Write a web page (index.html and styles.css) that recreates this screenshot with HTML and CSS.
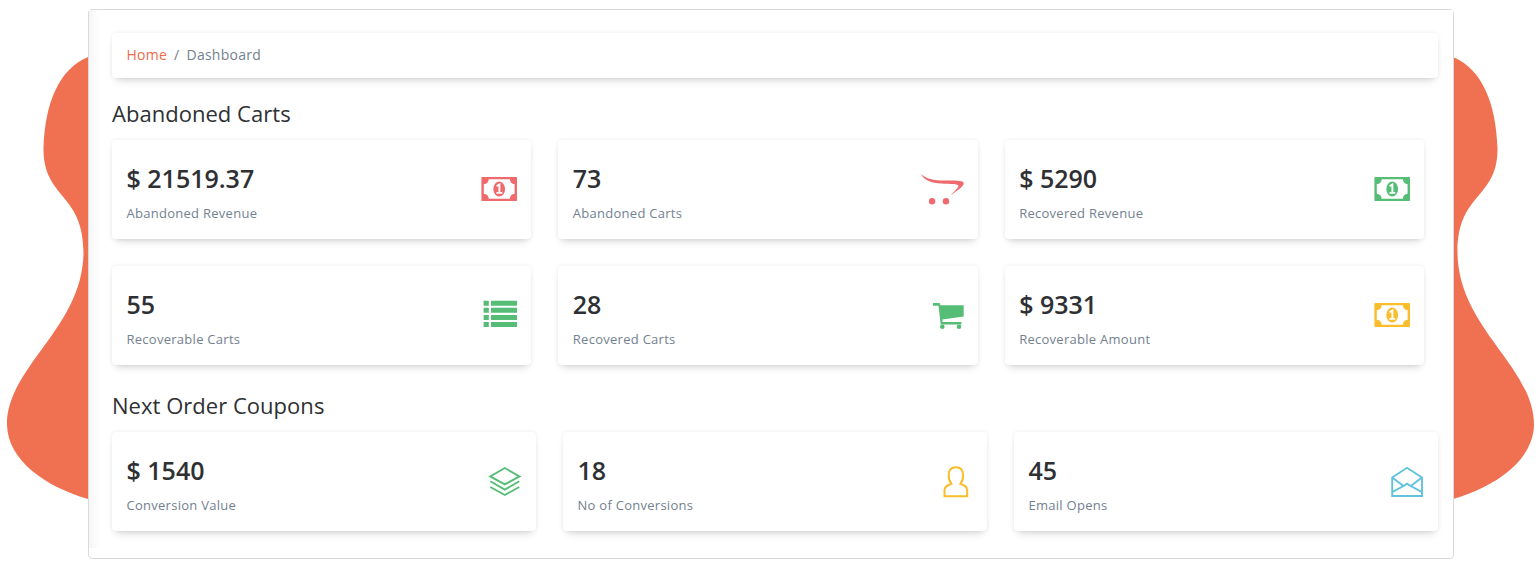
FILE: index.html
```html
<!DOCTYPE html>
<html lang="en">
<head>
<meta charset="utf-8">
<title>Dashboard</title>
<link rel="stylesheet" href="styles.css">
</head>
<body>
<svg class="blob" width="1540" height="572" viewBox="0 0 1540 572" aria-hidden="true">
  <path d="M88 57C59 69 45 103 43.500 148C43 199 83 192 83.500 252C83 328 7 366 7 425C8 460 44 486 88 499Z"/>
  <path d="M1453 57C1482 69 1496 103 1497.500 148C1498 199 1457.500 192 1457.500 252C1458 328 1534 366 1534 425C1533 460 1497 486 1453 499Z"/>
</svg>
<svg class="symbols" width="0" height="0" aria-hidden="true">
  <symbol id="money" viewBox="0 0 44 36">
    <path fill="currentColor" fill-rule="evenodd" d="M9.200 5H43.200Q44 5 44 5.800V28.200Q44 29 43.200 29H9.200Q8.400 29 8.400 28.200V5.800Q8.400 5 9.200 5ZM15.700 7.300Q15.500 12 10.800 12.300V21.700Q15.500 22 15.700 26.700H36.900Q37.100 22 41.600 21.700V12.300Q37.100 12 36.900 7.300Z"/>
    <ellipse cx="26.200" cy="17" rx="5.900" ry="7.500" fill="currentColor"/>
    <path d="M23.600 14.200L26.400 12.400V20.600M23.400 20.900H29.300" fill="none" stroke="#fff" stroke-width="1.900"/>
  </symbol>
  <symbol id="opencart" viewBox="0 0 44 36">
    <path fill="currentColor" d="M1.200 2C6 6.800 13 8.500 25 8.500C36 8.500 43.800 8.300 43.800 11.300C43.800 14.500 37 18.500 31 23.200C35 18.200 40 14.700 38 13.100C36 11.600 28 12.200 18 11.200C8 10.200 2.500 6.200 1.200 2Z"/>
    <circle cx="12.100" cy="29.300" r="3.200" fill="currentColor"/><circle cx="26" cy="29.300" r="3.200" fill="currentColor"/>
  </symbol>
  <symbol id="list" viewBox="0 0 44 36">
    <path fill="currentColor" d="M10.600 2.700h5.200v5h-5.200zM18 2.700h26v5H18zM10.600 9.800h5.200v5h-5.200zM18 9.800h26v5H18zM10.600 16.900h5.200v5h-5.200zM18 16.900h26v5H18zM10.600 24h5.200v5h-5.200zM18 24h26v5H18z"/>
  </symbol>
  <symbol id="cart" viewBox="0 0 44 36">
    <path fill="currentColor" d="M13 5H19.600L20.500 7.200H43.700V18.500L22.300 21.400L22.500 24H41.400V26.500H20.700L18.500 7.800H13Z"/>
    <circle cx="22.300" cy="28.800" r="2.300" fill="currentColor"/><circle cx="39" cy="28.800" r="2.300" fill="currentColor"/>
  </symbol>
  <symbol id="layers" viewBox="0 0 44 36">
    <path fill="none" stroke="currentColor" stroke-width="1.900" d="M26.800 4L41.500 12.400L26.800 20.400L12.200 12.400ZM12.300 17.300L26.800 25.600L41.300 17.300M12.300 23L26.800 31L41.300 23"/>
  </symbol>
  <symbol id="user" viewBox="0 0 44 36">
    <path fill="none" stroke="currentColor" stroke-width="2" d="M15.500 32.200V26C15.500 22.500 18.500 21.300 22.400 19.900C20.500 17.500 19.500 14.500 19.700 11C19.700 6 22.500 3.200 26.900 3.200S34.100 6 34.100 11C34.300 14.500 33.300 17.500 31.400 19.900C35.300 21.300 38.200 22.500 38.200 26V32.200Z"/>
  </symbol>
  <symbol id="mail" viewBox="0 0 44 36">
    <path fill="none" stroke="currentColor" stroke-width="1.900" d="M12.200 13.500V32H42V13.500L27 3.800ZM12.200 13.500L23.500 22L27 19.700L30.700 22L42 13.500M12.200 28.200L23.500 22M30.700 22L42 28.200"/>
  </symbol>
</svg>

<main class="panel">
  <div class="content">
    <nav class="breadcrumb"><a class="crumb-link">Home</a><span>/</span><span>Dashboard</span></nav>

    <h2 class="section-title">Abandoned Carts</h2>
    <section class="cards cards-narrow">
      <article class="card"><div><div class="value">$ 21519.37</div><div class="label">Abandoned Revenue</div></div><svg class="icon red"><use href="#money"/></svg></article>
      <article class="card"><div><div class="value">73</div><div class="label">Abandoned Carts</div></div><svg class="icon red"><use href="#opencart"/></svg></article>
      <article class="card"><div><div class="value">$ 5290</div><div class="label">Recovered Revenue</div></div><svg class="icon green"><use href="#money"/></svg></article>
      <article class="card"><div><div class="value">55</div><div class="label">Recoverable Carts</div></div><svg class="icon green"><use href="#list"/></svg></article>
      <article class="card"><div><div class="value">28</div><div class="label">Recovered Carts</div></div><svg class="icon green"><use href="#cart"/></svg></article>
      <article class="card"><div><div class="value">$ 9331</div><div class="label">Recoverable Amount</div></div><svg class="icon yellow"><use href="#money"/></svg></article>
    </section>

    <h2 class="section-title">Next Order Coupons</h2>
    <section class="cards">
      <article class="card"><div><div class="value">$ 1540</div><div class="label">Conversion Value</div></div><svg class="icon green"><use href="#layers"/></svg></article>
      <article class="card"><div><div class="value">18</div><div class="label">No of Conversions</div></div><svg class="icon yellow"><use href="#user"/></svg></article>
      <article class="card"><div><div class="value">45</div><div class="label">Email Opens</div></div><svg class="icon blue"><use href="#mail"/></svg></article>
    </section>
  </div>
</main>
</body>
</html>
```
FILE: styles.css
```css
* { box-sizing: border-box; }
body {
  margin: 0;
  height: 572px;
  padding: 9px 86px 0 88px;
  overflow: hidden;
  background: #fff;
  color: #2e3033;
  font-family: "Open Sans", "Noto Sans", sans-serif;
}
.blob { position: absolute; top: 0; left: 0; z-index: -1; fill: #f07151; }
.symbols { position: absolute; }
.panel {
  height: 550px;
  border: 1px solid #d9dadb;
  border-radius: 4px;
  background: #fff;
}
.content {
  height: 538px;
  padding: 23px 15px 0 23px;
  background: linear-gradient(to right, #f5f5f5, #fefefe 9px, #fff 12px);
}
.breadcrumb, .card {
  border-radius: 4px;
  background: #fff;
  box-shadow: 0 0 4px rgba(0, 0, 0, .08), 0 6px 8px -4px rgba(0, 0, 0, .16);
}
.breadcrumb {
  display: flex;
  align-items: center;
  gap: 7px;
  height: 45px;
  padding: 0 15px 2px 14.500px;
  color: #73818f;
  font-size: 14px;
  letter-spacing: .25px;
}
.crumb-link { color: #f1694b; }
.section-title {
  margin: 21px 0 12px;
  font-size: 22px;
  font-weight: 400;
  line-height: 29px;
  letter-spacing: .03px;
}
.cards { display: grid; grid-template-columns: repeat(3, 1fr); gap: 27px; }
.cards-narrow { margin-right: 14px; }
.cards-narrow + .section-title { margin-top: 26px; }
.card {
  display: flex;
  justify-content: space-between;
  height: 99px;
  padding: 20px 14px 0 14.500px;
}
.value { font-size: 25px; font-weight: 600; line-height: 36px; }
.label { margin-top: 7px; color: #73818f; font-size: 13px; line-height: 20px; letter-spacing: .27px; }
.icon { width: 44px; height: 36px; margin-top: 12px; overflow: visible; }
.red { color: #ef6a6d; }
.green { color: #56bd76; }
.yellow { color: #f9bd2d; }
.blue { color: #62c2de; }
```
